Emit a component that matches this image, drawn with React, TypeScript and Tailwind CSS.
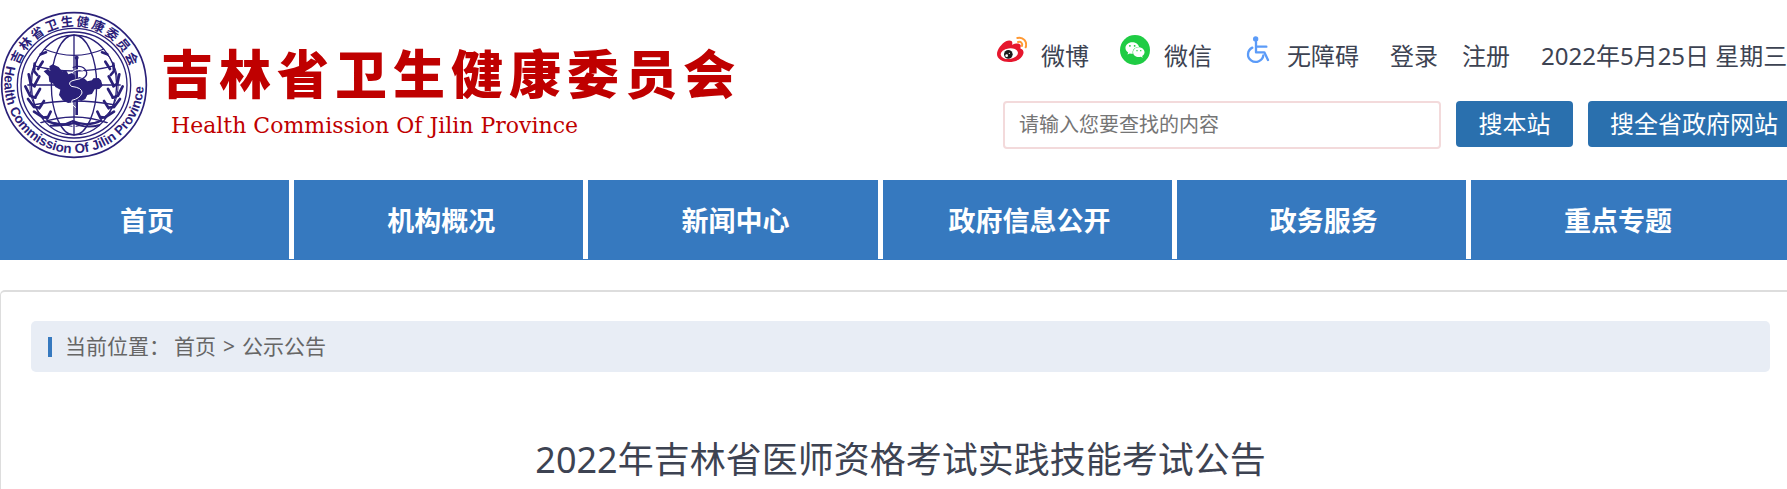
/**
 * NoticePage
 *
 * Site header (logo, account links, search), main navigation,
 * breadcrumb and the heading of a public notice.
 */

import type { ReactNode } from "react";
import { FaWeixin } from "react-icons/fa";

const NAV_ITEMS = ["首页", "机构概况", "新闻中心", "政府信息公开", "政务服务", "重点专题"];

const ORG_CHARS = "吉林省卫生健康委员会".split("");

// ---------------------------------------------------------------------------
// Drawings
// ---------------------------------------------------------------------------
function Laurel() {
  return (
    <g fill="none" stroke="#2a2079" strokeWidth="8" strokeLinecap="round">
      <path strokeWidth="3" d="M124 128C72 190 78 290 150 332L216 346" />
      <path d="M122 130L138 124M104 158L102 180L112 192M128 152L114 174" />
      <path d="M86 190L92 218L104 226M118 196L104 222M76 226L90 254L106 260" />
      <path d="M120 234L106 258M84 264L102 288L118 290M132 270L118 292" />
      <path d="M102 302L130 320L142 318M152 302L142 322" />
    </g>
  );
}

function Seal() {
  return (
    <svg
      viewBox="0 0 444 444"
      className="w-[148px] h-[148px] shrink-0"
      role="img"
      aria-label="Health Commission Of Jilin Province"
    >
      <defs>
        <path id="seal-bottom" d="M 20 164 A 209 209 0 1 0 431 222 A 209 209 0 0 0 427 178" />
        <clipPath id="seal-globe">
          <circle cx="222" cy="222" r="152" />
        </clipPath>
      </defs>
      <g fill="none" stroke="#2a2079">
        <circle cx="222" cy="222" r="217" strokeWidth="5" />
        <circle cx="222" cy="222" r="170" strokeWidth="4" />
        <circle cx="222" cy="222" r="159" strokeWidth="4" />
        {/* Globe */}
        <g strokeWidth="4" clipPath="url(#seal-globe)">
          <ellipse cx="222" cy="222" rx="128" ry="150" />
          <ellipse cx="222" cy="222" rx="68" ry="150" />
          <path d="M222 70V374M82 222H362" />
          <path d="M132 114Q222 152 312 114M100 164Q222 196 344 164" />
          <path d="M98 282Q222 258 346 282M120 336Q222 300 324 336" />
        </g>
      </g>
      <Laurel />
      <g transform="matrix(-1 0 0 1 444 0)">
        <Laurel />
      </g>
      <path
        d="M140 330Q182 350 218 330Q262 350 306 328M150 344Q196 344 222 336Q254 354 300 342"
        fill="none"
        stroke="#2a2079"
        strokeWidth="6"
      />
      {/* Province outline */}
      <path
        fill="#2a2079"
        d="M131 181L143 174L151 180L148 166L158 160L176 168L186 181L198 177L205 190L216 186L224 192L226 204L238 198L254 203L262 211L276 208L280 202L296 201L303 208L308 224L298 234L284 235L276 249L262 252L256 264L244 270L234 266L222 274L204 276L188 268L177 252L181 236L166 228L160 218L148 212L146 196Z"
      />
      {/* Staff and snake */}
      <path d="M230 138V312" stroke="#2a2079" strokeWidth="8" />
      <path
        d="M218 182Q242 168 254 184Q260 202 228 206Q198 212 214 226Q248 230 246 246Q240 262 216 268Q212 280 228 290"
        fill="none"
        stroke="#fff"
        strokeWidth="3"
      />
      <path d="M218 170Q250 158 260 184Q262 198 240 206" fill="none" stroke="#2a2079" strokeWidth="4" />
      <circle cx="230" cy="140" r="6" fill="#2a2079" />
      {/* Lettering */}
      {ORG_CHARS.map((char, i) => (
        <text
          key={char}
          x="222"
          y="45"
          textAnchor="middle"
          fill="#2a2079"
          transform={`rotate(${-64 + i * 14.4} 222 222)`}
          className="font-['Noto_Sans_CJK_SC',sans-serif] text-[38px] font-bold"
        >
          {char}
        </text>
      ))}
      <text fill="#2a2079" className="font-['Liberation_Sans',sans-serif] text-[40px] font-bold">
        <textPath href="#seal-bottom">Health Commission Of Jilin Province</textPath>
      </text>
    </svg>
  );
}

function WeiboIcon() {
  return (
    <svg viewBox="51 45 90 90" className="w-[30px] h-[30px] shrink-0" aria-hidden="true">
      <path
        fill="#e6162d"
        d="M78 64C86 60 97 61 97 68C97 72 96 74 98 74C106 70 120 69 122 76C123 80 120 84 122 86C129 88 132 94 130 101C126 117 107 126 87 126C66 126 51 116 51 102C51 89 65 71 78 64Z"
      />
      <ellipse cx="88" cy="101" rx="26" ry="16" fill="#fff" transform="rotate(-8 88 101)" />
      <circle cx="85" cy="103" r="13" fill="#1a1a1a" />
      <circle cx="80" cy="107" r="4" fill="#fff" />
      <circle cx="88" cy="100" r="2" fill="#fff" />
      <g fill="none" stroke="#ff9933" strokeWidth="6" strokeLinecap="round">
        <path d="M112 54C129 49 143 65 137 82" />
        <path d="M114 66C122 63 129 70 126 78" />
      </g>
    </svg>
  );
}

function WechatIcon() {
  return (
    <span className="flex w-[30px] h-[30px] shrink-0 items-center justify-center rounded-full bg-[#1fcc44] text-white">
      <FaWeixin size={20} aria-hidden="true" />
    </span>
  );
}

function AccessIcon() {
  return (
    <svg viewBox="788 45 90 90" className="w-[30px] h-[30px] shrink-0" aria-hidden="true">
      <circle cx="826" cy="57" r="8" fill="#5b9bf8" />
      <g fill="none" stroke="#5b9bf8" strokeWidth="7" strokeLinejoin="round" strokeLinecap="round">
        <path d="M827 66V97H852L863 120" />
        <path d="M829 80H858" />
        <path d="M816 83C800 91 799 112 812 121C827 132 847 122 849 106" />
      </g>
    </svg>
  );
}

// ---------------------------------------------------------------------------
// Header
// ---------------------------------------------------------------------------
function IconLink({ icon, label }: { icon: ReactNode; label: string }) {
  return (
    <a href="#" className="flex items-start gap-3.5">
      {icon}
      <span className="pt-1.5">{label}</span>
    </a>
  );
}

function Header() {
  return (
    <header className="flex justify-between">
      <a href="#" className="flex items-start pt-[11px] pb-[21px] text-[#bf0000]">
        <Seal />
        <span className="pt-[31px] pl-[13px] whitespace-nowrap">
          <span className="flex gap-1.5 text-[52px] leading-[64px] font-black">
            {ORG_CHARS.map((char) => (
              <span key={char}>{char}</span>
            ))}
          </span>
          <span className="block pl-2.5 font-['DejaVu_Serif',serif] text-[22px] leading-[40px]">
            Health Commission Of Jilin Province
          </span>
        </span>
      </a>

      <div className="-mr-[13px] shrink-0 pt-[35px] text-[24px] leading-[30px] whitespace-nowrap">
        <div className="flex items-start">
          <div className="flex gap-[31px]">
            <IconLink icon={<WeiboIcon />} label="微博" />
            <IconLink icon={<WechatIcon />} label="微信" />
            <IconLink icon={<AccessIcon />} label="无障碍" />
          </div>
          <a href="#" className="pt-1.5 pl-[31px]">登录</a>
          <a href="#" className="pt-1.5 pl-6">注册</a>
          <span className="pt-1.5 pl-[31px]">2022年5月25日 星期三</span>
        </div>

        <form className="flex items-start gap-[15px] pt-[30px] pl-1.5" onSubmit={(e) => e.preventDefault()}>
          <input
            type="text"
            aria-label="搜索"
            placeholder="请输入您要查找的内容"
            className="h-12 w-[438px] rounded border-2 border-[#f3dadb] px-3.5 pb-0.5 text-[20px] placeholder:text-[#757575]"
          />
          <button type="submit" className="h-[46px] w-[117px] rounded bg-[#2a70ae] text-white">
            搜本站
          </button>
          <button type="button" className="h-[46px] rounded bg-[#2a70ae] px-[22px] text-white">
            搜全省政府网站
          </button>
        </form>
      </div>
    </header>
  );
}

export default function App() {
  return (
    <div className="overflow-hidden bg-white font-['Noto_Sans','Noto_Sans_CJK_SC',sans-serif] text-[#3d4352]">
      <Header />

      {/* Main navigation */}
      <nav className="bg-[#3679bf] pb-px">
        <ul className="flex pr-[22px]">
          {NAV_ITEMS.map((item) => (
            <li key={item} className="flex-1 border-r-[5px] border-white pl-[5px] last:border-transparent">
              <a href="#" className="block pt-[21px] pb-[19px] text-center text-[27px] leading-[39px] font-bold text-white">
                {item}
              </a>
            </li>
          ))}
        </ul>
      </nav>

      {/* Article */}
      <main className="mt-[30px] -mr-3.5 rounded-t-[5px] border border-t-2 border-b-0 border-[#ddd] px-[30px] pt-[29px]">
        <div className="flex h-[51px] items-center rounded-[5px] bg-[#e8edf5] pl-[17px] text-[21px] text-[#666]">
          <span className="mr-[13px] h-5 w-1 bg-[#3679bf]" />
          <span>当前位置：</span>
          <a href="#" className="ml-1">首页</a>
          <span className="mx-[7px]">&gt;</span>
          <a href="#">公示公告</a>
        </div>
        <h1 className="pt-[59px] text-center text-[36px] leading-[58px]">
          2022年吉林省医师资格考试实践技能考试公告
        </h1>
      </main>
    </div>
  );
}
